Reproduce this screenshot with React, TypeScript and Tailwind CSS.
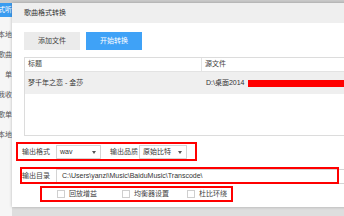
import React from "react";

const font = { fontFamily: '"Liberation Sans", "Noto Sans CJK SC", sans-serif' };

function Select({ value, width }: { value: string; width: string }) {
  return (
    <div className={`${width} h-[14px] border border-[#d4d4d4] bg-white flex items-center justify-between pl-[3px] pr-[4px]`}>
      <span className="text-[7px] text-[#333]">{value}</span>
      <svg width="4" height="3" viewBox="0 0 4 3"><path d="M0 0 L4 0 L2 3 Z" fill="#555" /></svg>
    </div>
  );
}

function Check({ label }: { label: string }) {
  return (
    <div className="flex items-center gap-[4px]">
      <div className="w-[8px] h-[8px] border border-[#cfcfcf] bg-white" />
      <span className="text-[7px] text-[#444]">{label}</span>
    </div>
  );
}

export default function App() {
  const side = [
    { t: "式听", active: true, h: "h-[14px]" },
    { t: "本地", h: "h-[20px]" },
    { t: "歌曲", h: "h-[20px]" },
    { t: "单", h: "h-[20px]" },
    { t: "我收", h: "h-[20px]" },
    { t: "歌单", h: "h-[20px]" },
    { t: "本地", h: "h-[20px]" },
  ];
  return (
    <div className="w-[344px] h-[216px] relative overflow-hidden bg-[#dedede]" style={font}>
      <div className="h-[3px] bg-[#cbcbcb]" />
      <div className="flex">
        <div className="w-[12px] shrink-0 h-[213px] bg-[#f6f6f6] overflow-hidden flex flex-col">
          {side.map((s, i) => (
            <div
              key={i}
              className={`${s.h} ${i === 1 ? "mt-[8px]" : ""} flex items-center justify-end whitespace-nowrap text-[7px] ${s.active ? "bg-[#3b9cf0] text-white" : "text-[#555]"}`}
            >
              {s.t}
            </div>
          ))}
        </div>
        <div className="w-[350px] shrink-0 h-[204px] bg-white shadow-[0_0_3px_rgba(0,0,0,0.25)] flex flex-col">
          <div className="h-[20px] bg-[#efefef] flex items-center pl-[12px] text-[7px] text-[#333]">歌曲格式转换</div>
          <div className="pl-[12px] flex flex-col">
            <div className="mt-[9px] flex gap-[6px]">
              <div className="w-[56px] h-[18px] bg-[#ebebeb] flex items-center justify-center text-[7px] text-[#444]">添加文件</div>
              <div className="w-[56px] h-[18px] bg-[#3fa2f7] flex items-center justify-center text-[7px] text-white">开始转换</div>
            </div>
            <div className="mt-[7px] h-[79px] border border-[#dcdcdc] flex flex-col">
              <div className="h-[14px] border-b border-[#e3e3e3] flex text-[7px] text-[#444]">
                <div className="w-[177px] pl-[3px] border-r border-[#e3e3e3] flex items-center">标题</div>
                <div className="pl-[3px] flex items-center">源文件</div>
              </div>
              <div className="h-[22px] bg-[#efefef] flex text-[7px] text-[#333]">
                <div className="w-[177px] pl-[3px] flex items-center">梦千年之恋 - 金莎</div>
                <div className="pl-[4px] flex items-center">
                  <span>D:\桌面2014</span>
                  <div className="ml-[3px] w-[110px] h-[7px] bg-[#ff0000]" />
                </div>
              </div>
            </div>
            <div className="mt-[9px] h-[14px] flex items-center">
              <span className="w-[32px] -ml-[2px] text-[7px] text-[#444]">输出格式</span>
              <div className="ml-[2px]"><Select value="wav" width="w-[45px]" /></div>
              <span className="ml-[9px] w-[29px] text-[7px] text-[#444]">输出品质</span>
              <Select value="原始比特" width="w-[48px]" />
            </div>
            <div className="mt-[10px] h-[15px] flex items-center">
              <span className="w-[32px] -ml-[2px] text-[7px] text-[#444]">输出目录</span>
              <div className="ml-[2px] w-[290px] h-[15px] border border-[#d4d4d4] flex items-center pl-[5px] text-[7px] text-[#333]">
                C:\Users\yanzi\Music\BaiduMusic\Transcode\
              </div>
            </div>
            <div className="mt-[6px] h-[8px] flex items-center pl-[33px] gap-[0px]">
              <div className="w-[65px]"><Check label="回放增益" /></div>
              <div className="w-[65px]"><Check label="均衡器设置" /></div>
              <Check label="杜比环绕" />
            </div>
          </div>
        </div>
      </div>
      <div className="absolute left-[16px] top-[142px] w-[181px] h-[19px] border-2 border-[#ff0000]" />
      <div className="absolute left-[20px] top-[167px] w-[319px] h-[17px] border-2 border-[#ff0000]" />
      <div className="absolute left-[40px] top-[186px] w-[193px] h-[16px] border-2 border-[#ff0000]" />
    </div>
  );
}
